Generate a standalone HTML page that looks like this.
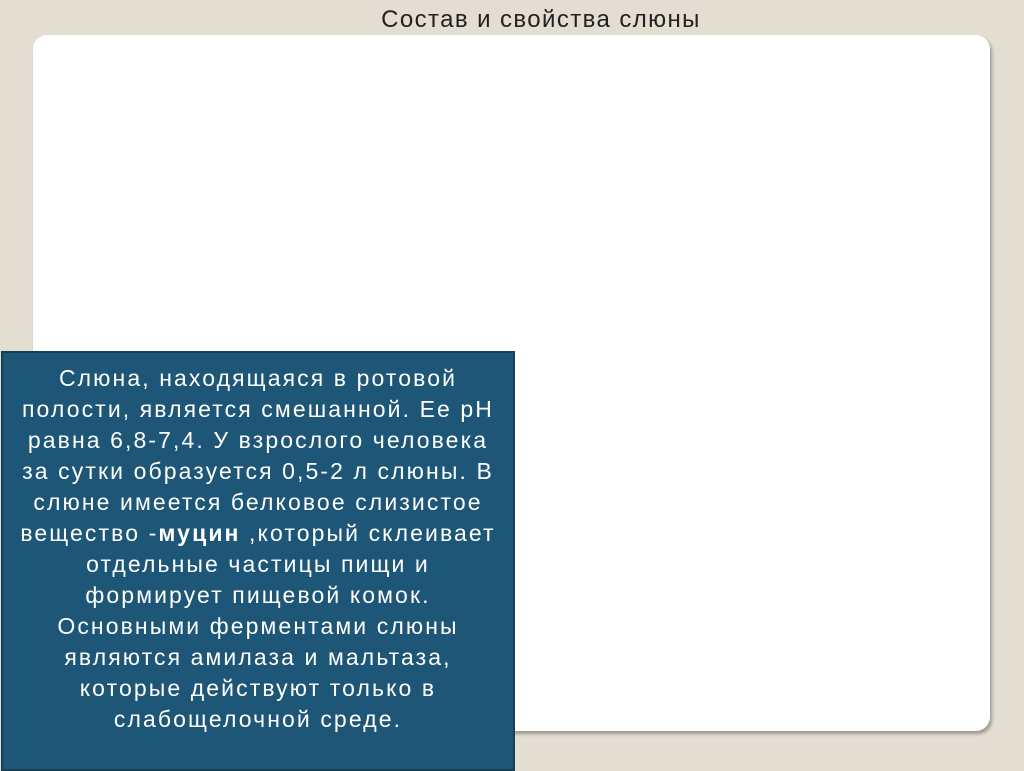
<!DOCTYPE html>
<html><head><meta charset="utf-8"><style>
html,body{margin:0;padding:0}
body{width:1024px;height:767px;background:#e3ddd2;position:relative;overflow:hidden;font-family:"Liberation Sans","DejaVu Sans",sans-serif}
.title{position:absolute;left:0;width:1082px;top:6px;text-align:center;font-size:24px;letter-spacing:1.4px;color:#222}
.panel{position:absolute;left:33px;top:35px;width:957px;height:696px;background:#fff;border-radius:14px;box-shadow:2px 3px 3px rgba(0,0,0,.3)}
.box{position:absolute;left:1px;top:351px;width:514px;height:420px;background:#1d5676;border:2px solid #163f58;box-sizing:border-box;color:#fff;text-align:center;font-size:23px;letter-spacing:2.1px;line-height:31px;padding-top:10px;white-space:nowrap}
</style></head><body>
<div class="title">Состав и свойства слюны</div>
<div class="panel"></div>
<div class="box">Слюна, находящаяся в ротовой<br>полости, является смешанной. Ее рН<br>равна 6,8-7,4. У взрослого человека<br>за сутки образуется 0,5-2 л слюны. В<br>слюне имеется белковое слизистое<br>вещество -<b>муцин</b> ,который склеивает<br>отдельные частицы пищи и<br>формирует пищевой комок.<br>Основными ферментами слюны<br>являются амилаза и мальтаза,<br>которые действуют только в<br>слабощелочной среде.</div>
</body></html>
